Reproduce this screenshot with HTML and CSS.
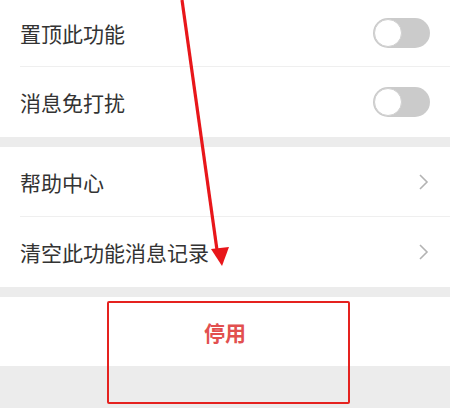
FILE: index.html
```html
<!DOCTYPE html>
<html lang="zh-CN">
<head>
    <meta charset="UTF-8">
    <meta name="viewport" content="width=device-width, initial-scale=1.0">
    <title>功能设置</title>
    <link rel="stylesheet" href="styles.css">
</head>
<body>

<div class="page">
    <div class="group">
        <div class="row">
            <span class="row-label">置顶此功能</span>
            <span class="switch"><span class="knob"></span></span>
        </div>
        <div class="row">
            <span class="row-label">消息免打扰</span>
            <span class="switch"><span class="knob"></span></span>
        </div>
    </div>

    <div class="group">
        <div class="row">
            <span class="row-label">帮助中心</span>
            <svg class="chevron" width="12" height="18" viewBox="0 0 12 18"><path d="M3 2l7 7-7 7" fill="none" stroke="#b3b3b3" stroke-width="1.6"/></svg>
        </div>
        <div class="row">
            <span class="row-label">清空此功能消息记录</span>
            <svg class="chevron" width="12" height="18" viewBox="0 0 12 18"><path d="M3 2l7 7-7 7" fill="none" stroke="#b3b3b3" stroke-width="1.6"/></svg>
        </div>
    </div>

    <div class="group">
        <div class="stop-btn">停用</div>
    </div>

    <!-- 标注 -->
    <div class="mark-box"></div>
    <svg class="mark-arrow" width="450" height="408" viewBox="0 0 450 408">
        <path d="M182 0 L217 250" stroke="#e8161a" stroke-width="3.2" fill="none"/>
        <path d="M211 249 L229 247 L222 266 Z" fill="#e8161a"/>
    </svg>
</div>

</body>
</html>
```

FILE: styles.css
```css
* {
    margin: 0;
    padding: 0;
    box-sizing: border-box;
}

body {
    background-color: #ececec;
    font-family: "Noto Sans CJK SC", "Noto Sans", sans-serif;
    width: 450px;
    height: 408px;
    overflow: hidden;
}

.page {
    position: relative;
    height: 408px;
}

/* 分组 */
.group {
    background: #fff;
    margin-bottom: 10px;
}

.row {
    height: 70px;
    margin-left: 20px;
    padding-right: 20px;
    display: flex;
    align-items: center;
    justify-content: space-between;
    border-bottom: 1px solid #efefef;
}

.row:last-child {
    border-bottom: none;
}

.group:first-child .row:first-child {
    height: 67px;
}

.row-label {
    font-size: 21px;
    color: #333;
}

/* 开关 */
.switch {
    width: 57px;
    height: 30px;
    border-radius: 15px;
    background: #cbcbcb;
    display: flex;
    align-items: center;
    padding-left: 1px;
}

.knob {
    width: 28px;
    height: 28px;
    border-radius: 50%;
    background: #fff;
    border: 1px solid #d0d0d0;
}

.chevron {
    margin-right: 1px;
}

/* 停用 */
.stop-btn {
    height: 69px;
    display: flex;
    align-items: center;
    justify-content: center;
    font-size: 21px;
    font-weight: bold;
    color: #e2504f;
}

/* 标注 */
.mark-box {
    position: absolute;
    left: 107px;
    top: 301px;
    width: 243px;
    height: 103px;
    border: 2px solid #e5221f;
    border-radius: 2px;
}

.mark-arrow {
    position: absolute;
    left: 0;
    top: 0;
}
```
